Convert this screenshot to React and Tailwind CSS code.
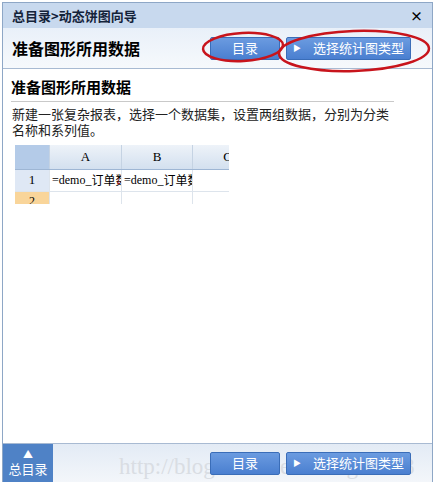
import React from "react";

const cjk = { fontFamily: '"Noto Sans CJK SC", "Noto Sans", sans-serif' };
const serif = { fontFamily: '"Liberation Serif", "Noto Sans CJK SC", serif' };

// Blue action button
function BlueButton({ children, arrow, className = "" }) {
  return (
    <div
      className={`flex h-[23px] items-center justify-center rounded-[2px] border border-[#3a6db8] bg-gradient-to-b from-[#6b9be0] to-[#4a7fd0] text-[13px] text-white ${className}`}
    >
      {arrow && <span className="mr-3 text-[8px]">▶</span>}
      {children}
    </div>
  );
}

function Sheet() {
  return (
    <div className="mt-[7px] ml-[4px] w-[214px] overflow-hidden text-[13px] text-black" style={serif}>
      <div className="flex h-[25px] border-b border-[#9eb6d4]">
        <div className="w-[34px] bg-[#b4cbe8]" />
        <div className="flex w-[72px] items-center justify-center border-l border-[#c5d3e3] bg-gradient-to-b from-[#eef3f9] to-[#d3e0ef]">A</div>
        <div className="flex w-[71px] items-center justify-center border-l border-[#c5d3e3] bg-gradient-to-b from-[#eef3f9] to-[#d3e0ef]">B</div>
        <div className="flex w-[37px] items-center justify-end overflow-hidden border-l border-[#c5d3e3] bg-gradient-to-b from-[#eef3f9] to-[#d3e0ef]">
          <span className="-mr-[3px]">C</span>
        </div>
      </div>
      <div className="flex h-[22px] border-b border-[#dde4ec]">
        <div className="flex w-[34px] items-center justify-center bg-[#dfe8f5]">1</div>
        <div className="relative flex w-[72px] items-center overflow-hidden whitespace-nowrap border-l border-[#dde4ec] pl-[2px] text-[12px]">
          =demo_<span style={cjk} className="text-[12px]">订单数</span>
          <span className="absolute right-0 top-[5px] text-[11px] leading-none text-[#c0141a]">↓</span>
        </div>
        <div className="flex w-[71px] items-center overflow-hidden whitespace-nowrap border-l border-[#dde4ec] pl-[2px] text-[12px]">
          =demo_<span style={cjk} className="text-[12px]">订单数</span>
        </div>
        <div className="w-[37px] border-l border-[#dde4ec]" />
      </div>
      <div className="flex h-[12px]">
        <div className="flex w-[34px] justify-center overflow-hidden bg-[#f9d59a] text-[12px] leading-[18px]">2</div>
        <div className="w-[72px] border-l border-[#dde4ec]" />
        <div className="w-[71px] border-l border-[#dde4ec]" />
        <div className="w-[37px] border-l border-[#dde4ec]" />
      </div>
    </div>
  );
}

export default function App() {
  return (
    <div className="relative h-[482px] w-[438px] overflow-hidden bg-white pl-[2px] pt-[2px]" style={cjk}>
      <div className="flex h-[480px] w-[431px] flex-col border-x border-t border-[#8ea7c6]">
        {/* title bar */}
        <div className="flex h-[25px] shrink-0 items-center justify-between bg-[#c8d9ee] pl-[9px] pr-[9px]">
          <span className="text-[13px] font-bold text-[#14233a]">总目录&gt;动态饼图向导</span>
          <span className="text-[13px] font-bold text-black">×</span>
        </div>

        {/* step header */}
        <div className="flex h-[41px] shrink-0 items-center border-b border-[#a8bad2] bg-gradient-to-b from-[#e9f0f9] to-[#f6f9fc] pl-[9px] pr-[21px]">
          <span className="text-[16px] font-bold text-black">准备图形所用数据</span>
          <div className="ml-auto flex gap-[6px]">
            <BlueButton className="w-[70px]">目录</BlueButton>
            <BlueButton arrow className="w-[125px]">选择统计图类型</BlueButton>
          </div>
        </div>

        {/* content */}
        <div className="flex-1 bg-white px-[8px] pt-[7px]">
          <div className="w-[383px] border-b border-[#c9c9c9] pb-[2px] text-[15px] font-bold text-black">
            准备图形所用数据
          </div>
          <p className="mt-[4px] w-[385px] pl-[1px] text-[13px] leading-[16px] text-[#222]">
            新建一张复杂报表，选择一个数据集，设置两组数据，分别为分类名称和系列值。
          </p>
          <Sheet />
        </div>

        {/* bottom bar */}
        <div className="relative flex h-[39px] shrink-0 items-center border-t border-[#a8bad2] bg-gradient-to-b from-[#e3ebf5] to-[#f3f6fa]">
          <div className="flex h-full w-[50px] flex-col items-center justify-center bg-[#4f82c6] text-white">
            <span className="text-[10px] leading-[12px]">▲</span>
            <span className="text-[13px] leading-[18px]">总目录</span>
          </div>
          <span
            className="absolute left-[116px] top-[6px] whitespace-nowrap text-[23px] text-[#d9dde3]"
            style={serif}
          >
            http://blog.csdn.net/zhang11788
          </span>
          <div className="relative ml-auto mr-[21px] flex gap-[6px]">
            <BlueButton className="w-[70px]">目录</BlueButton>
            <BlueButton arrow className="w-[125px]">选择统计图类型</BlueButton>
          </div>
        </div>
      </div>

      {/* red annotation ellipses */}
      <svg className="pointer-events-none absolute left-0 top-0" width="438" height="482">
        <ellipse cx="243" cy="47" rx="40" ry="14" fill="none" stroke="#c8141c" strokeWidth="2.5" transform="rotate(-3 243 47)" />
        <ellipse cx="354" cy="51" rx="75" ry="20" fill="none" stroke="#c8141c" strokeWidth="2.5" transform="rotate(-2 354 51)" />
      </svg>
    </div>
  );
}
